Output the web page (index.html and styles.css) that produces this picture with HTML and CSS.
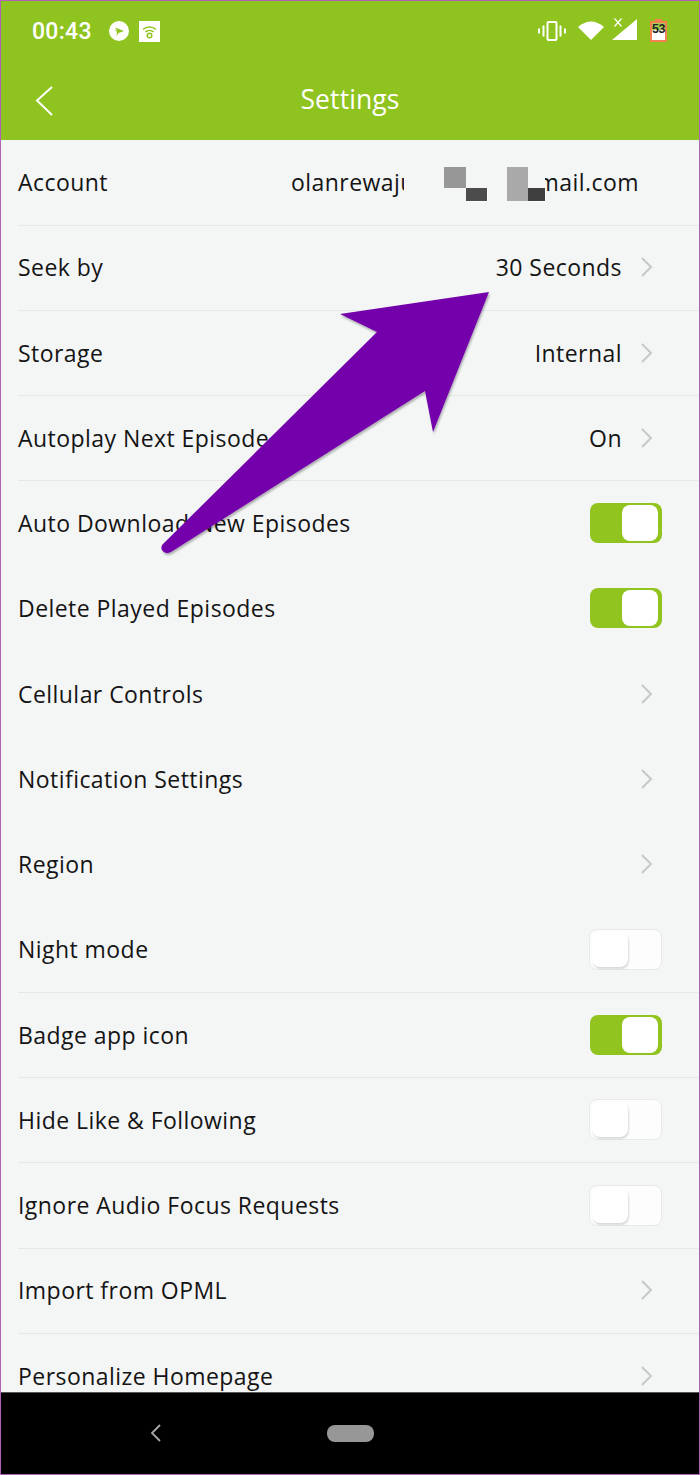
FILE: index.html
```html
<!DOCTYPE html>
<html lang="en">
<head>
<meta charset="utf-8">
<title>Settings</title>
<link rel="stylesheet" href="styles.css">
</head>
<body>
<div class="phone">
  <header class="appbar">
    <div class="status">
      <div class="status-left">
        <span class="clock">00:43</span>
        <svg class="ic-play" viewBox="0 0 20 20"><circle cx="10" cy="10" r="10" fill="#fff"/><path d="M6 6.500l9 3.500-5.500 2-2 3 .5-4.500L5 9.500h3z" fill="#8fc31f"/></svg>
        <svg class="ic-wifibox" viewBox="0 0 21 21"><rect width="21" height="21" fill="#fff"/><path d="M4 8.500a9.500 9.500 0 0 1 13 0M6.300 11a6.300 6.300 0 0 1 8.400 0" fill="none" stroke="#8fc31f" stroke-width="1.500"/><circle cx="10.500" cy="14.500" r="2.300" fill="none" stroke="#8fc31f" stroke-width="1.500"/></svg>
      </div>
      <div class="status-right">
        <svg class="ic-vib" viewBox="0 0 28 20"><rect x="9.500" y="1" width="9" height="18" rx="1" fill="none" stroke="#fff" stroke-width="2"/><path d="M5.500 4.500v11M1 7.500v5M22.500 4.500v11M27 7.500v5" stroke="#fff" stroke-width="2"/></svg>
        <svg class="ic-wifi" viewBox="0 0 26 19"><path d="M0 6Q13-5 26 6L13 19z" fill="#fff"/></svg>
        <svg class="ic-signal" viewBox="0 0 25 23"><path d="M25 1v21H0z" fill="#fff"/><path d="M2.500 .5l7 8M9.500 .5l-7 8" stroke="#fff" stroke-width="1.200"/></svg>
        <div class="battery"><span class="battery-top"></span><span class="battery-num">53</span></div>
      </div>
    </div>
    <div class="titlebar">
      <svg class="ic-back" viewBox="0 0 20 32"><path d="M18 2L3 15.500 18 30" fill="none" stroke="#fff" stroke-width="2"/></svg>
      <h1 class="title">Settings</h1>
    </div>
  </header>

  <main class="list">
    <div class="row line account">
      <span class="label">Account</span>
      <div class="email">
        <span class="email-a">olanrewaju</span>
        <span class="pix pix-a"><i class="p1"></i><i class="p2"></i></span>
        <span class="pix pix-b"><i class="p3"></i><i class="p4"></i></span>
        <span class="email-b">mail.com</span>
      </div>
    </div>
    <div class="row line"><span class="label">Seek by</span><span class="value">30 Seconds</span><svg class="chev" viewBox="0 0 14 22"><path d="M2 2l9 9-9 9"/></svg></div>
    <div class="row line"><span class="label">Storage</span><span class="value">Internal</span><svg class="chev" viewBox="0 0 14 22"><path d="M2 2l9 9-9 9"/></svg></div>
    <div class="row line"><span class="label">Autoplay Next Episode</span><span class="value">On</span><svg class="chev" viewBox="0 0 14 22"><path d="M2 2l9 9-9 9"/></svg></div>
    <div class="row"><span class="label">Auto Download New Episodes</span><span class="toggle on"><i></i></span></div>
    <div class="row"><span class="label">Delete Played Episodes</span><span class="toggle on"><i></i></span></div>
    <div class="row"><span class="label">Cellular Controls</span><svg class="chev" viewBox="0 0 14 22"><path d="M2 2l9 9-9 9"/></svg></div>
    <div class="row"><span class="label">Notification Settings</span><svg class="chev" viewBox="0 0 14 22"><path d="M2 2l9 9-9 9"/></svg></div>
    <div class="row"><span class="label">Region</span><svg class="chev" viewBox="0 0 14 22"><path d="M2 2l9 9-9 9"/></svg></div>
    <div class="row line"><span class="label">Night mode</span><span class="toggle"><i></i></span></div>
    <div class="row line"><span class="label">Badge app icon</span><span class="toggle on"><i></i></span></div>
    <div class="row line"><span class="label">Hide Like &amp; Following</span><span class="toggle"><i></i></span></div>
    <div class="row line"><span class="label">Ignore Audio Focus Requests</span><span class="toggle"><i></i></span></div>
    <div class="row line"><span class="label">Import from OPML</span><svg class="chev" viewBox="0 0 14 22"><path d="M2 2l9 9-9 9"/></svg></div>
    <div class="row"><span class="label">Personalize Homepage</span><svg class="chev" viewBox="0 0 14 22"><path d="M2 2l9 9-9 9"/></svg></div>
  </main>

  <nav class="navbar">
    <svg class="nav-back" viewBox="0 0 12 18"><path d="M10 1L2 9l8 8" fill="none" stroke="#a8a8a8" stroke-width="1.800"/></svg>
    <span class="nav-home"></span>
  </nav>

  <svg class="arrow" viewBox="0 0 340 300">
    <defs><filter id="sh" x="-5%" y="-5%" width="110%" height="110%"><feDropShadow dx="1" dy="2" stdDeviation="1" flood-color="#000" flood-opacity=".3"/></filter></defs>
    <path filter="url(#sh)" d="M330 1L274 141 266 100 12 261Q6 264 3 259 1 255 5 252L218 41 181 23z" fill="#7304aa"/>
  </svg>
</div>
</body>
</html>
```
FILE: styles.css
```css
* { box-sizing: border-box; }
html, body { margin: 0; padding: 0; }
body { width: 700px; height: 1475px; overflow: hidden; background: #000; font-family: "Open Sans", "Noto Sans", sans-serif; }
.phone { position: relative; width: 700px; height: 1475px; display: flex; flex-direction: column; overflow: hidden; background: #f4f6f6; border: 1px solid #b262b6; }

.appbar { flex: 0 0 139px; background: #8fc31f; display: flex; flex-direction: column; }
.status { flex: 0 0 60px; display: flex; justify-content: space-between; align-items: center; padding: 0 32px 0 31px; }
.status-left { display: flex; align-items: center; }
.clock { color: #fff; font-family: Roboto, sans-serif; font-size: 23px; font-weight: 500; letter-spacing: .3px; width: 77px; }
.ic-play { width: 20px; height: 20px; margin-left: 0; }
.ic-wifibox { width: 21px; height: 21px; margin-left: 10px; }
.status-right { display: flex; align-items: center; }
.ic-vib { width: 28px; height: 20px; margin-right: 12px; }
.ic-wifi { width: 26px; height: 19px; margin-right: 8px; margin-top: -1px; }
.ic-signal { width: 25px; height: 23px; margin-right: 13px; margin-top: -3px; }
.battery { position: relative; width: 17px; height: 21px; border: 2px solid #f47f50; margin-top: 0; background: linear-gradient(#a8cf55 0 40%, #fff 40%); display: flex; justify-content: center; align-items: center; }
.battery-top { position: absolute; top: -4px; left: 3px; width: 7px; height: 2px; background: #f47f50; }
.battery-num { font: 700 12.500px/1 "Liberation Sans", sans-serif; color: #222; letter-spacing: -.5px; margin-top: -4px; }

.titlebar { flex: 1; position: relative; display: flex; align-items: center; justify-content: center; }
.ic-back { position: absolute; left: 33px; top: 24px; width: 20px; height: 32px; }
.title { margin: -4px 0 0; font-size: 26.500px; font-weight: 400; color: #fff; letter-spacing: .1px; }

.list { flex: 1; min-height: 0; overflow: hidden; margin-top: -.6px; }
.row { height: 85.25px; margin-left: 17px; padding-right: 37px; display: flex; align-items: center; }
.line { box-shadow: 0 1px 0 #e6e8e8; }
.label { flex: 1; font-size: 23px; letter-spacing: .45px; color: #141414; white-space: nowrap; }
.value { font-size: 23px; letter-spacing: .45px; color: #141414; margin-right: 18px; }
.chev { width: 14px; height: 22px; fill: none; stroke: #c6c8c8; stroke-width: 2; margin-right: 8px; }
.account { padding-right: 60px; }
.email { position: relative; width: 348px; height: 34px; display: flex; align-items: center; font-size: 23px; letter-spacing: .45px; color: #141414; }
.email-a { width: 113px; overflow: hidden; white-space: nowrap; }
.email-b { margin-left: auto; white-space: nowrap; }
.pix { position: absolute; top: 2px; display: block; height: 34px; }
.pix i { position: absolute; display: block; }
.pix-a { left: 153px; width: 43px; }
.pix-b { left: 216px; width: 38px; background: #f5f6f6; }
.p1 { left: 0; top: 0; width: 22px; height: 21px; background: #979797; }
.p2 { left: 22px; top: 21px; width: 21px; height: 13px; background: #4c4c4c; box-shadow: 1px 1px 0 #fff; }
.p3 { left: 0; top: 0; width: 21px; height: 34px; background: #a9a9a9; }
.p4 { left: 21px; top: 21px; width: 17px; height: 13px; background: #3f3f3f; box-shadow: 1px 1px 0 #fff; }

.toggle { position: relative; display: block; width: 73px; height: 41px; margin-left: -1px; border-radius: 8px; background: #fdfdfd; border: 1px solid #e8e9e9; }
.toggle i { position: absolute; left: 2px; top: 2px; width: 36px; height: 35px; border-radius: 8px; background: #fff; box-shadow: 1px 2px 2px rgba(0,0,0,.14); }
.toggle.on { width: 72px; height: 40px; margin-left: 0; background: #92c420; border: 0; }
.toggle.on i { left: 32px; top: 2px; width: 36px; height: 36px; box-shadow: none; }

.navbar { flex: 0 0 82px; position: relative; background: #000; border-top: 1px solid #555; display: flex; align-items: center; justify-content: center; }
.nav-back { position: absolute; left: 149px; top: 31px; width: 12px; height: 18px; }
.nav-home { display: block; width: 47px; height: 17px; background: #979797; border-radius: 8px; }

.arrow { position: absolute; left: 158px; top: 290px; width: 340px; height: 300px; pointer-events: none; }
```
